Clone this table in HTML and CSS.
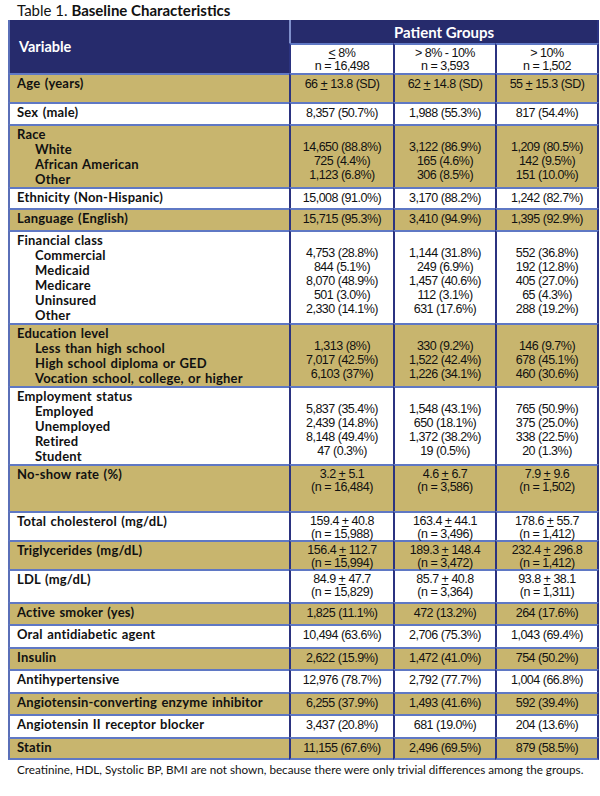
FILE: index.html
```html
<!DOCTYPE html>
<html lang="en">
<head>
<meta charset="utf-8">
<title>Table 1. Baseline Characteristics</title>
<link rel="stylesheet" href="styles.css">
</head>
<body>
<p class="caption">Table 1. <b>Baseline Characteristics</b></p>
<table class="tbl">
  <colgroup>
    <col class="c-var"><col class="c-g1"><col class="c-g2"><col class="c-g3">
  </colgroup>
  <thead>
    <tr class="hd-top">
      <th rowspan="2" class="th-var">Variable</th>
      <th colspan="3" class="th-groups">Patient Groups</th>
    </tr>
    <tr class="hd-sub">
      <th class="th-sub"><u>&lt;</u> 8%<br>n = 16,498</th>
      <th class="th-sub">&gt; 8% - 10%<br>n = 3,593</th>
      <th class="th-sub">&gt; 10%<br>n = 1,502</th>
    </tr>
  </thead>
  <tbody>
    <tr class="gold h29">
      <td class="lab">Age (years)</td>
      <td class="val">66 <u>+</u> 13.8 (SD)</td>
      <td class="val">62 <u>+</u> 14.8 (SD)</td>
      <td class="val">55 <u>+</u> 15.3 (SD)</td>
    </tr>
    <tr class="white h22">
      <td class="lab">Sex (male)</td>
      <td class="val">8,357 (50.7%)</td>
      <td class="val">1,988 (55.3%)</td>
      <td class="val">817 (54.4%)</td>
    </tr>
    <tr class="gold h63">
      <td class="lab">Race<span class="sub">White</span><span class="sub">African American</span><span class="sub">Other</span></td>
      <td class="val multi">14,650 (88.8%)<br>725 (4.4%)<br>1,123 (6.8%)</td>
      <td class="val multi">3,122 (86.9%)<br>165 (4.6%)<br>306 (8.5%)</td>
      <td class="val multi">1,209 (80.5%)<br>142 (9.5%)<br>151 (10.0%)</td>
    </tr>
    <tr class="white h21">
      <td class="lab">Ethnicity (Non-Hispanic)</td>
      <td class="val">15,008 (91.0%)</td>
      <td class="val">3,170 (88.2%)</td>
      <td class="val">1,242 (82.7%)</td>
    </tr>
    <tr class="gold h22">
      <td class="lab">Language (English)</td>
      <td class="val">15,715 (95.3%)</td>
      <td class="val">3,410 (94.9%)</td>
      <td class="val">1,395 (92.9%)</td>
    </tr>
    <tr class="white h93">
      <td class="lab">Financial class<span class="sub">Commercial</span><span class="sub">Medicaid</span><span class="sub">Medicare</span><span class="sub">Uninsured</span><span class="sub">Other</span></td>
      <td class="val multi">4,753 (28.8%)<br>844 (5.1%)<br>8,070 (48.9%)<br>501 (3.0%)<br>2,330 (14.1%)</td>
      <td class="val multi">1,144 (31.8%)<br>249 (6.9%)<br>1,457 (40.6%)<br>112 (3.1%)<br>631 (17.6%)</td>
      <td class="val multi">552 (36.8%)<br>192 (12.8%)<br>405 (27.0%)<br>65 (4.3%)<br>288 (19.2%)</td>
    </tr>
    <tr class="gold h61">
      <td class="lab">Education level<span class="sub">Less than high school</span><span class="sub">High school diploma or GED</span><span class="sub">Vocation school, college, or higher</span></td>
      <td class="val multi">1,313 (8%)<br>7,017 (42.5%)<br>6,103 (37%)</td>
      <td class="val multi">330 (9.2%)<br>1,522 (42.4%)<br>1,226 (34.1%)</td>
      <td class="val multi">146 (9.7%)<br>678 (45.1%)<br>460 (30.6%)</td>
    </tr>
    <tr class="white h78">
      <td class="lab">Employment status<span class="sub">Employed</span><span class="sub">Unemployed</span><span class="sub">Retired</span><span class="sub">Student</span></td>
      <td class="val multi">5,837 (35.4%)<br>2,439 (14.8%)<br>8,148 (49.4%)<br>47 (0.3%)</td>
      <td class="val multi">1,548 (43.1%)<br>650 (18.1%)<br>1,372 (38.2%)<br>19 (0.5%)</td>
      <td class="val multi">765 (50.9%)<br>375 (25.0%)<br>338 (22.5%)<br>20 (1.3%)</td>
    </tr>
    <tr class="gold h47">
      <td class="lab">No-show rate (%)</td>
      <td class="val two">3.2 <u>+</u> 5.1<br>(n = 16,484)</td>
      <td class="val two">4.6 <u>+</u> 6.7<br>(n = 3,586)</td>
      <td class="val two">7.9 <u>+</u> 9.6<br>(n = 1,502)</td>
    </tr>
    <tr class="white h29">
      <td class="lab">Total cholesterol (mg/dL)</td>
      <td class="val two">159.4 <u>+</u> 40.8<br>(n = 15,988)</td>
      <td class="val two">163.4 <u>+</u> 44.1<br>(n = 3,496)</td>
      <td class="val two">178.6 <u>+</u> 55.7<br>(n = 1,412)</td>
    </tr>
    <tr class="gold h28">
      <td class="lab">Triglycerides (mg/dL)</td>
      <td class="val two">156.4 <u>+</u> 112.7<br>(n = 15,994)</td>
      <td class="val two">189.3 <u>+</u> 148.4<br>(n = 3,472)</td>
      <td class="val two">232.4 <u>+</u> 296.8<br>(n = 1,412)</td>
    </tr>
    <tr class="white h33">
      <td class="lab">LDL (mg/dL)</td>
      <td class="val two">84.9 <u>+</u> 47.7<br>(n = 15,829)</td>
      <td class="val two">85.7 <u>+</u> 40.8<br>(n = 3,364)</td>
      <td class="val two">93.8 <u>+</u> 38.1<br>(n = 1,311)</td>
    </tr>
    <tr class="gold h22">
      <td class="lab">Active smoker (yes)</td>
      <td class="val">1,825 (11.1%)</td>
      <td class="val">472 (13.2%)</td>
      <td class="val">264 (17.6%)</td>
    </tr>
    <tr class="white h23">
      <td class="lab">Oral antidiabetic agent</td>
      <td class="val">10,494 (63.6%)</td>
      <td class="val">2,706 (75.3%)</td>
      <td class="val">1,043 (69.4%)</td>
    </tr>
    <tr class="gold h22">
      <td class="lab">Insulin</td>
      <td class="val">2,622 (15.9%)</td>
      <td class="val">1,472 (41.0%)</td>
      <td class="val">754 (50.2%)</td>
    </tr>
    <tr class="white h23">
      <td class="lab">Antihypertensive</td>
      <td class="val">12,976 (78.7%)</td>
      <td class="val">2,792 (77.7%)</td>
      <td class="val">1,004 (66.8%)</td>
    </tr>
    <tr class="gold h22">
      <td class="lab">Angiotensin-converting enzyme inhibitor</td>
      <td class="val">6,255 (37.9%)</td>
      <td class="val">1,493 (41.6%)</td>
      <td class="val">592 (39.4%)</td>
    </tr>
    <tr class="white h23">
      <td class="lab">Angiotensin II receptor blocker</td>
      <td class="val">3,437 (20.8%)</td>
      <td class="val">681 (19.0%)</td>
      <td class="val">204 (13.6%)</td>
    </tr>
    <tr class="gold h23 last">
      <td class="lab">Statin</td>
      <td class="val">11,155 (67.6%)</td>
      <td class="val">2,496 (69.5%)</td>
      <td class="val">879 (58.5%)</td>
    </tr>
  </tbody>
</table>
<p class="note">Creatinine, HDL, Systolic BP, BMI are not shown, because there were only trivial differences among the groups.</p>
</body>
</html>
```
FILE: styles.css
```css
html, body {
  margin: 0;
  padding: 0;
  background: #ffffff;
}

body {
  padding: 2px 0 0 8px;
  font-family: "Liberation Sans", Arial, sans-serif;
  color: #111111;
}

.caption {
  margin: 0 0 1px 9px;
  font-family: Lato, "Open Sans", sans-serif;
  font-size: 15px;
  line-height: 17px;
  color: #111111;
}

.caption b {
  font-weight: 700;
}

.tbl {
  width: 591px;
  table-layout: fixed;
  border-collapse: separate;
  border-spacing: 0;
}

.c-var { width: 281px; }
.c-g1 { width: 104px; }
.c-g2 { width: 102px; }
.c-g3 { width: 104px; }

/* header */
.hd-top { height: 23px; }
.hd-sub { height: 29px; }

.th-var {
  background: #262b6c;
  color: #ffffff;
  font-family: Lato, "Open Sans", sans-serif;
  font-weight: 700;
  font-size: 14.5px;
  text-align: left;
  vertical-align: middle;
  padding: 0 0 0 9px;
  border-left: 2px solid #5a6fb8;
}

.th-groups {
  background: #262b6c;
  color: #ffffff;
  font-family: Lato, "Open Sans", sans-serif;
  font-weight: 700;
  font-size: 15px;
  text-align: center;
  vertical-align: middle;
  padding: 0;
  border-left: 2px solid #8090cc;
  border-right: 2px solid #2b3380;
}

.th-sub {
  background: #ffffff;
  font-weight: 400;
  font-size: 12.5px;
  letter-spacing: -0.5px;
  line-height: 13px;
  text-align: center;
  vertical-align: top;
  padding: 2px 0 0;
  border-left: 2px solid #2b3380;
  border-top: 2px solid #5f78c4;
}

.th-sub:last-child {
  border-right: 2px solid #2b3380;
}

u {
  text-decoration-thickness: 1px;
  text-underline-offset: 1px;
}

/* body rows */
.gold td { background: #c8b56e; }
.white td { background: #ffffff; }

.h21 { height: 21px; }
.h22 { height: 22px; }
.h23 { height: 23px; }
.h28 { height: 28px; }
.h29 { height: 29px; }
.h33 { height: 33px; }
.h47 { height: 47px; }
.h61 { height: 61px; }
.h63 { height: 63px; }
.h78 { height: 78px; }
.h93 { height: 93px; }

td {
  vertical-align: top;
  border-top: 2px solid #5f78c4;
}

.last td {
  border-bottom: 2px solid #5f78c4;
}

.lab {
  font-family: Lato, "Open Sans", sans-serif;
  font-weight: 700;
  font-size: 13px;
  letter-spacing: 0.2px;
  word-spacing: 1px;
  line-height: 15px;
  color: #111111;
  padding: 1px 4px 0 7px;
  border-left: 2px solid #5a6fb8;
  white-space: nowrap;
}

.sub {
  display: block;
  padding-left: 18px;
}

.val {
  font-size: 12.5px;
  letter-spacing: -0.5px;
  line-height: 14px;
  text-align: center;
  padding: 2px 0 0;
  border-left: 2px solid #2b3380;
  white-space: nowrap;
}

.val:last-child {
  border-right: 2px solid #2b3380;
}

.val.multi {
  padding-top: 14px;
}

.val.two {
  line-height: 12.5px;
  padding-top: 2px;
}

.note {
  margin: 2px 0 0 9px;
  font-family: Lato, "Open Sans", sans-serif;
  font-size: 11.7px;
  line-height: 15px;
  color: #111111;
}
```
